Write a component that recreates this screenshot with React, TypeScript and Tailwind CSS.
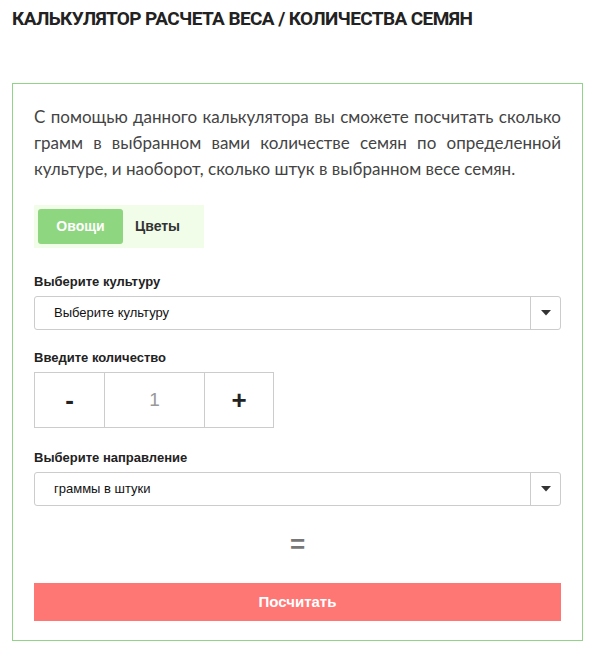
import React, { useState } from 'react';

const SelectBox: React.FC<{ value: string; options: string[]; onChange: (v: string) => void }> = ({ value, options, onChange }) => {
  return (
    <div className="relative flex h-[34px] w-full rounded-[3px] border border-[#cccccc] bg-white">
      <select
        value={value}
        onChange={(e) => onChange(e.target.value)}
        className="h-full flex-1 appearance-none bg-transparent pl-[19px] text-[13px] text-[#111] outline-none"
      >
        {options.map((o) => (
          <option key={o} value={o}>{o}</option>
        ))}
      </select>
      <div className="pointer-events-none flex w-[30px] items-center justify-center border-l border-[#cccccc]">
        <svg width="10" height="6" viewBox="0 0 10 6">
          <path d="M0 0 H10 L5 5.5 Z" fill="#333" />
        </svg>
      </div>
    </div>
  );
};

export default function App() {
  const [tab, setTab] = useState<'veg' | 'flowers'>('veg');
  const [culture, setCulture] = useState('Выберите культуру');
  const [qty, setQty] = useState(1);
  const [direction, setDirection] = useState('граммы в штуки');

  return (
    <div className="min-h-[657px] w-[595px] bg-white font-['Liberation_Sans',Arial,sans-serif]">
      <h1 className="px-[12px] pt-[7px] font-['Roboto',sans-serif] text-[19px] font-bold uppercase leading-[24px] tracking-[-0.6px] text-[#222]">
        Калькулятор расчета веса / количества семян
      </h1>

      <div className="mx-[12px] mt-[52px] border border-[#90d48a] px-[21px] pt-[20px] pb-[19px]">
        <p className="font-['Lato',sans-serif] text-[17px] leading-[26px] text-[#444]">
          <span className="block [text-align-last:justify]">С помощью данного калькулятора вы сможете посчитать сколько</span>
          <span className="block [text-align-last:justify]">грамм в выбранном вами количестве семян по определенной</span>
          <span className="block">культуре, и наоборот, сколько штук в выбранном весе семян.</span>
        </p>

        <div className="mt-[23px] inline-flex bg-[#f1fde9] p-[4px]">
          <button
            onClick={() => setTab('veg')}
            className={`h-[35px] w-[85px] rounded-[3px] text-[14px] font-bold ${tab === 'veg' ? 'bg-[#8fd680] text-white' : 'text-[#333]'}`}
          >
            Овощи
          </button>
          <button
            onClick={() => setTab('flowers')}
            className={`h-[35px] w-[77px] rounded-[3px] pl-[12px] text-left text-[14px] font-bold ${tab === 'flowers' ? 'bg-[#8fd680] text-white' : 'text-[#333]'}`}
          >
            Цветы
          </button>
        </div>

        <label className="mt-[26px] block text-[13px] font-bold leading-[16px] text-[#222]">Выберите культуру</label>
        <div className="mt-[6px]">
          <SelectBox value={culture} options={['Выберите культуру']} onChange={setCulture} />
        </div>

        <label className="mt-[20px] block text-[13px] font-bold leading-[16px] text-[#222]">Введите количество</label>
        <div className="mt-[6px] flex h-[56px] w-[240px] border border-[#cccccc]">
          <button onClick={() => setQty(Math.max(1, qty - 1))} className="w-[69px] text-[26px] font-bold text-[#222]">-</button>
          <div className="flex w-[101px] items-center justify-center border-x border-[#cccccc] text-[19px] text-[#999]">{qty}</div>
          <button onClick={() => setQty(qty + 1)} className="flex-1 text-[26px] font-bold text-[#222]">+</button>
        </div>

        <label className="mt-[22px] block text-[13px] font-bold leading-[16px] text-[#222]">Выберите направление</label>
        <div className="mt-[6px]">
          <SelectBox value={direction} options={['граммы в штуки', 'штуки в граммы']} onChange={setDirection} />
        </div>

        <div className="mt-[18px] flex h-[40px] items-center justify-center text-[26px] font-bold text-[#777]">=</div>

        <button className="mt-[19px] h-[38px] w-full bg-[#ff7775] text-[15px] font-bold text-white">Посчитать</button>
      </div>
    </div>
  );
}
